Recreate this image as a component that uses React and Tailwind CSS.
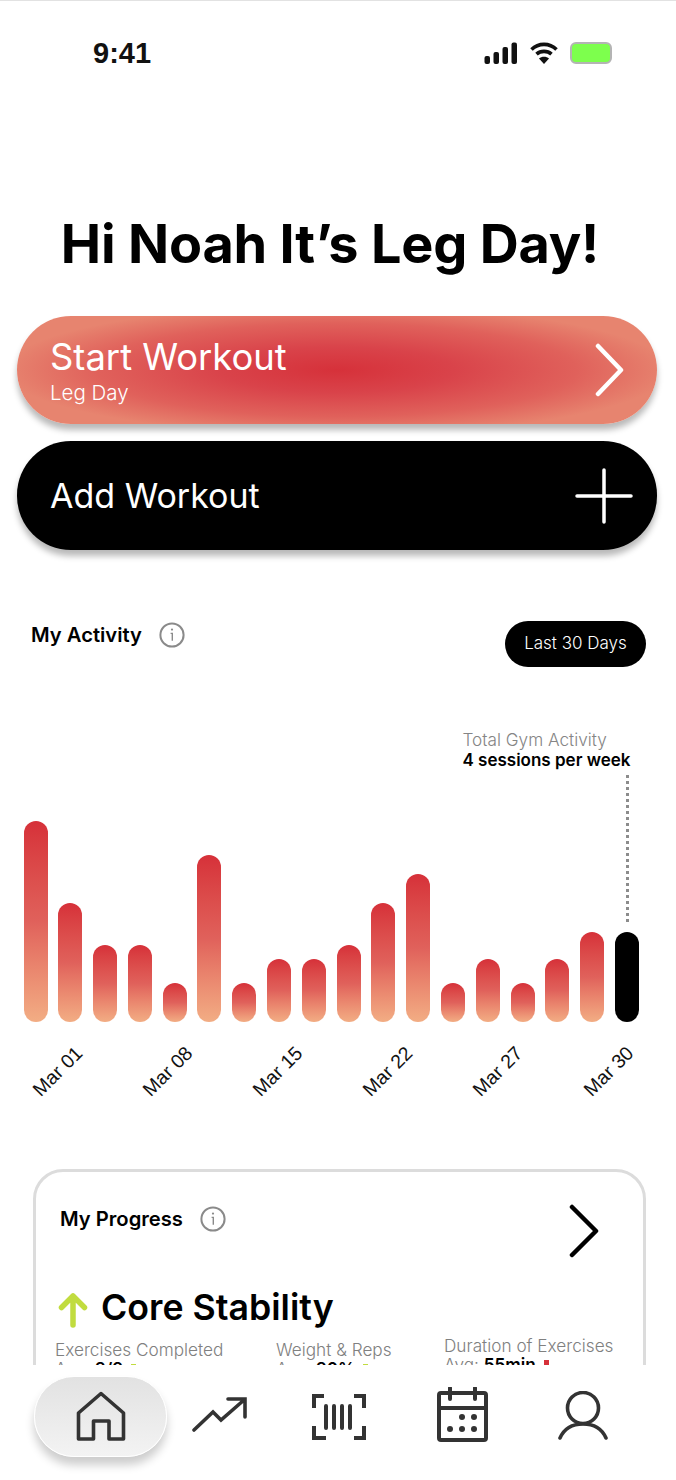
import React from 'react';

const bars = [
  201, 119, 77, 77, 39, 167, 39, 63, 63, 77, 119, 148, 39, 63, 39, 63, 90,
];

function Info({ className }) {
  return (
    <svg viewBox="0 0 26 26" className={className} fill="none" stroke="#8a8a8a">
      <circle cx="13" cy="13" r="11.6" strokeWidth="2" />
      <path d="M11.6 11.4h1.7v7.4" strokeWidth="1.4" />
      <circle cx="13" cy="7.600" r="1.100" fill="#8a8a8a" stroke="none" />
    </svg>
  );
}

function Stat({ label, value, color, className }) {
  return (
    <div className={`absolute whitespace-nowrap ${className}`}>
      <p className="text-[17.200px] leading-[22px] font-light text-[#808080]">{label}</p>
      <p className="-mt-[3px] text-[17.200px] leading-[22px] font-light text-[#808080]">
        Avg: <span className="font-semibold text-black">{value}</span>
        <span className={`inline-block ml-2 w-[5px] h-[12px] align-[-1px] ${color}`} />
      </p>
    </div>
  );
}

function App() {
  return (
    <div className="w-[676px] h-[1480px] flex flex-col overflow-hidden bg-white font-['Inter',sans-serif]">
      <div className="h-[1365px] overflow-hidden shrink-0 border-t border-[#e2e2e2]">
        {/* status bar */}
        <div className="h-[103px] flex justify-between items-start pt-[33px] pl-[93px] pr-[65px]">
          <span className="text-[29px] leading-[38px] font-bold font-['Liberation_Sans',sans-serif] text-[#111]">
            9:41
          </span>
          <div className="flex items-center gap-[12px] pt-[7px]">
            <svg width="34" height="22" viewBox="0 0 34 22" fill="#111">
              <rect x="0.5" y="14" width="5.5" height="8" rx="2" />
              <rect x="9.5" y="10" width="5.5" height="12" rx="2" />
              <rect x="18.5" y="5" width="5.5" height="17" rx="2" />
              <rect x="27.5" y="0.5" width="5.5" height="21.5" rx="2" />
            </svg>
            <svg width="28" height="23" viewBox="0 0 28 23" fill="none" stroke="#111" strokeWidth="3.600">
              <path d="M1.500 8.500c7-6.800 18-6.800 25 0" />
              <path d="M6.500 13.200c4.200-3.800 10.800-3.800 15 0" />
              <path d="M14 23l-5-5.500c2.500-2.200 7.500-2.200 10 0z" fill="#111" stroke="none" />
            </svg>
            <div className="w-[42px] h-[22px] -mr-[1px] rounded-[6px] border-2 border-[#b4b4b4] bg-[#7dff4d]" />
          </div>
        </div>

        <h1 className="mt-[108px] pr-[16px] text-center text-[54px] leading-[64px] font-bold text-black tracking-[-0.2px]">
          Hi Noah It’s Leg Day!
        </h1>

        {/* action buttons */}
        <div className="mt-[40px] ml-[17px] mr-[19px] flex flex-col gap-[17px]">
          <div className="h-[108px] rounded-[54px] flex items-center justify-between pl-[33px] pr-[32px] text-white bg-[radial-gradient(ellipse_52%_60%_at_50%_50%,#d6313a_0%,#d9434a_35%,#e0615b_72%,#e7846f_100%)] shadow-[0_6px_6px_rgba(0,0,0,0.28)]">
            <div className="pt-[1px]">
              <p className="text-[36.400px] leading-[42px] font-normal">Start Workout</p>
              <p className="mt-[2px] text-[20.500px] leading-[26px] font-light">Leg Day</p>
            </div>
            <svg width="32" height="54" viewBox="0 0 32 54" fill="none" stroke="white" strokeWidth="4.500" strokeLinecap="round" strokeLinejoin="round">
              <path d="M5 3l23 24-23 24" />
            </svg>
          </div>
          <div className="h-[109px] rounded-[54px] flex items-center justify-between pl-[33px] pr-[24px] text-white bg-black shadow-[0_6px_6px_rgba(0,0,0,0.28)]">
            <p className="text-[34px] leading-[42px] font-normal">Add Workout</p>
            <svg width="58" height="56" viewBox="0 0 58 56" fill="none" stroke="white" strokeWidth="3.500" strokeLinecap="round">
              <path d="M29 2v52M2 28h54" />
            </svg>
          </div>
        </div>

        {/* activity header */}
        <div className="mt-[71px] ml-[31px] mr-[30px] flex items-start justify-between">
          <div className="flex items-center gap-[17px] h-[28px]">
            <span className="text-[20.200px] font-semibold text-black">My Activity</span>
            <Info className="w-[26px] h-[26px]" />
          </div>
          <div className="w-[141px] h-[46px] rounded-full bg-black text-white flex items-center justify-center text-[17px] font-light">
            Last 30 Days
          </div>
        </div>

        {/* chart */}
        <div className="relative h-[502px]">
          <div className="absolute left-[462.500px] top-[62px] whitespace-nowrap">
            <p className="text-[17.200px] leading-[21px] font-light text-[#858585]">Total Gym Activity</p>
            <p className="text-[17px] leading-[21px] font-semibold text-black">4 sessions per week</p>
          </div>
          <div className="absolute left-[625.500px] top-[108px] h-[147px] border-l-[3px] border-dotted border-[#8c8c8c]" />
          <div className="h-[355px] flex items-end gap-[10.800px] pl-[23.500px]">
            {bars.map((h, i) => (
              <div
                key={i}
                className="w-[24px] rounded-full bg-gradient-to-b from-[#d63039] via-[#e0615b] to-[#f2ad84]"
                style={{ height: h }}
              />
            ))}
            <div className="w-[24px] h-[90px] rounded-full bg-black" />
          </div>
          <div className="mt-[39px] pl-[2px] flex">
            {['Mar 01', 'Mar 08', 'Mar 15', 'Mar 22', 'Mar 27', 'Mar 30'].map((d) => (
              <div key={d} className="w-[110.200px] flex justify-center">
                <span className="-rotate-45 whitespace-nowrap text-[19.500px] leading-[20px] text-[#111] font-['Liberation_Sans',sans-serif]">
                  {d}
                </span>
              </div>
            ))}
          </div>
        </div>

        {/* progress card */}
        <div className="relative ml-[33px] w-[613px] h-[300px] rounded-[30px] border-[3px] border-[#dcdcdc] bg-white">
          <div className="absolute left-[24px] top-[32px] flex items-center gap-[17px] h-[30px]">
            <span className="text-[20.200px] font-semibold text-black">My Progress</span>
            <Info className="w-[26px] h-[26px]" />
          </div>
          <svg className="absolute left-[533px] top-[32px]" width="30" height="54" viewBox="0 0 30 54" fill="none" stroke="black" strokeWidth="4.500" strokeLinecap="round" strokeLinejoin="round">
            <path d="M3 3l24 24-24 24" />
          </svg>
          <svg className="absolute left-[22px] top-[120px]" width="30" height="36" viewBox="0 0 30 36" fill="none" stroke="#c1dc3f" strokeWidth="5.500" strokeLinecap="round" strokeLinejoin="round">
            <path d="M15 33V4M3.500 15.500L15 4l11.500 11.500" />
          </svg>
          <p className="absolute left-[65px] top-[113px] text-[35.700px] leading-[44px] font-semibold text-black whitespace-nowrap">
            Core Stability
          </p>
          <Stat className="left-[19px] top-[167px]" label="Exercises Completed" value="8/9" color="bg-[#c1dc3f]" />
          <Stat className="left-[240px] top-[167px]" label="Weight & Reps" value="80%" color="bg-[#c1dc3f]" />
          <Stat className="left-[408px] top-[163px]" label="Duration of Exercises" value="55min" color="bg-[#d63039]" />
        </div>
      </div>

      {/* bottom nav */}
      <div className="flex-1 flex items-start bg-white text-[#333]">
        <div className="ml-[34px] mt-[11px] w-[133px] h-[81px] rounded-[40px] flex items-center justify-center bg-gradient-to-b from-[#e2e2e2] to-[#f3f3f3] border border-white shadow-[0_8px_10px_rgba(0,0,0,0.2)]">
          <svg width="50" height="52" viewBox="0 0 50 52" fill="none" stroke="#333" strokeWidth="3.600" strokeLinejoin="round">
            <path d="M2.500 48V22L25 2.500 47.500 22v26H33V30H17.500v18z" />
          </svg>
        </div>
        <svg className="ml-[25px] mt-[32px]" width="55" height="36" viewBox="0 0 55 36" fill="none" stroke="#333" strokeWidth="3.600" strokeLinecap="round" strokeLinejoin="miter">
          <path d="M2 33l19-18 8 8L52 3M36 2h17v18" />
        </svg>
        <svg className="ml-[65px] mt-[29px]" width="54" height="46" viewBox="0 0 54 46" fill="none" stroke="#333" strokeWidth="4" strokeLinecap="round">
          <path d="M12 2H2v12M2 32v12h12M42 2h10v12M52 32v12H42" strokeLinecap="butt" />
          <path d="M14 12v22M22 12v22M30 12v22M38 12v22" strokeWidth="4" />
        </svg>
        <svg className="ml-[71px] mt-[22px]" width="51" height="55" viewBox="0 0 51 55" fill="#333" stroke="none">
          <rect x="2" y="6" width="47" height="47" rx="2" fill="none" stroke="#333" strokeWidth="4" />
          <path d="M2 21h47" stroke="#333" strokeWidth="4" />
          <path d="M13 1v11M38 1v11" stroke="#333" strokeWidth="4" strokeLinecap="round" />
          <circle cx="25" cy="30" r="3" />
          <circle cx="37" cy="30" r="3" />
          <circle cx="13" cy="42" r="3" />
          <circle cx="25" cy="42" r="3" />
          <circle cx="37" cy="42" r="3" />
        </svg>
        <svg className="ml-[70px] mt-[26px]" width="50" height="50" viewBox="0 0 50 50" fill="none" stroke="#333" strokeWidth="3.600" strokeLinecap="round">
          <circle cx="25" cy="17" r="15.500" />
          <path d="M2 47c4-9 12-14 23-14s19 5 23 14" />
        </svg>
      </div>
    </div>
  );
}

export default App;
